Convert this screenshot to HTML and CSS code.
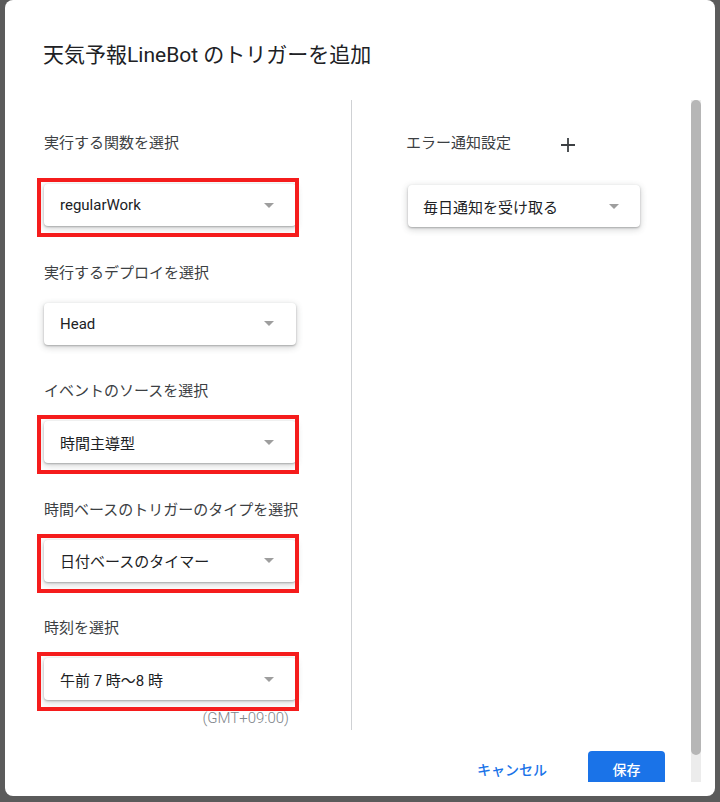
FILE: index.html
```html
<!DOCTYPE html>
<html lang="ja">
<head>
    <meta charset="UTF-8">
    <meta name="viewport" content="width=device-width, initial-scale=1.0">
    <title>トリガーを追加</title>
    <link rel="stylesheet" href="styles.css">
</head>
<body>

    <div class="dialog">
        <h2 class="dialog-title">天気予報LineBot のトリガーを追加</h2>

        <div class="dialog-body">
            <div class="dialog-scroll">
                <div class="columns">
                    <div class="col col-left">
                        <div class="field field-first">
                            <div class="field-label">実行する関数を選択</div>
                            <div class="select marked">
                                <span>regularWork</span>
                                <span class="select-arrow"></span>
                            </div>
                        </div>
                        <div class="field">
                            <div class="field-label">実行するデプロイを選択</div>
                            <div class="select">
                                <span>Head</span>
                                <span class="select-arrow"></span>
                            </div>
                        </div>
                        <div class="field">
                            <div class="field-label">イベントのソースを選択</div>
                            <div class="select marked">
                                <span>時間主導型</span>
                                <span class="select-arrow"></span>
                            </div>
                        </div>
                        <div class="field">
                            <div class="field-label">時間ベースのトリガーのタイプを選択</div>
                            <div class="select marked">
                                <span>日付ベースのタイマー</span>
                                <span class="select-arrow"></span>
                            </div>
                        </div>
                        <div class="field">
                            <div class="field-label">時刻を選択</div>
                            <div class="select marked">
                                <span>午前 7 時〜8 時</span>
                                <span class="select-arrow"></span>
                            </div>
                            <div class="tz-note">(GMT+09:00)</div>
                        </div>
                    </div>

                    <div class="col col-right">
                        <div class="field-label label-row">
                            <span>エラー通知設定</span>
                            <svg class="add-icon" width="14" height="14" viewBox="0 0 14 14">
                                <path d="M7 0v14M0 7h14" stroke="#3c4043" stroke-width="1.8" fill="none"/>
                            </svg>
                        </div>
                        <div class="select select-notify">
                            <span>毎日通知を受け取る</span>
                            <span class="select-arrow"></span>
                        </div>
                    </div>
                </div>

                <div class="actions">
                    <button class="btn btn-text">キャンセル</button>
                    <button class="btn btn-primary">保存</button>
                </div>
            </div>

            <div class="scrollbar">
                <div class="scrollbar-thumb"></div>
            </div>
        </div>
    </div>

</body>
</html>
```

FILE: styles.css
```css
html, body {
    margin: 0;
    height: 100%;
}
body {
    background-color: #5b5b5b;
    font-family: Roboto, 'Noto Sans CJK JP', sans-serif;
    color: #3c4043;
    overflow: hidden;
}
.dialog {
    width: 710px;
    height: 796px;
    margin-left: 5px;
    background-color: #fff;
    border-radius: 8px;
    display: flex;
    flex-direction: column;
}
.dialog-title {
    margin: 0;
    height: 100px;
    box-sizing: border-box;
    padding: 41px 0 0 38px;
    font-size: 21px;
    line-height: 28px;
    font-weight: 400;
    color: #202124;
}
.dialog-body {
    display: flex;
    height: 682px;
    padding-right: 14px;
}
.dialog-scroll {
    flex: 1;
    overflow: hidden;
}
.columns {
    display: flex;
    height: 630px;
}
.col-left {
    width: 347px;
    box-sizing: border-box;
    padding: 33px 0 0 39px;
    border-right: 1px solid #cfd1d4;
}
.col-right {
    padding: 33px 0 0 54px;
}

/* form fields */
.field + .field {
    margin-top: 36.5px;
}
.field-label {
    font-size: 15px;
    line-height: 20px;
    color: #3c4043;
    margin-bottom: 20px;
}
.field-first .field-label {
    margin-bottom: 31px;
}
.label-row {
    display: flex;
    align-items: center;
    margin-bottom: 32px;
}
.add-icon {
    margin-left: 50px;
    margin-top: 3px;
}
.select {
    width: 252px;
    height: 42px;
    box-sizing: border-box;
    padding: 0 22px 0 16px;
    display: flex;
    align-items: center;
    justify-content: space-between;
    background-color: #fff;
    border-radius: 4px;
    box-shadow: 0 1px 2px rgba(60,64,67,0.35), 0 2px 6px 1px rgba(60,64,67,0.2);
    font-size: 15px;
    color: #202124;
}
.select-arrow {
    width: 0;
    height: 0;
    border-left: 5px solid transparent;
    border-right: 5px solid transparent;
    border-top: 5px solid #9e9e9e;
}
.select-notify {
    width: 232px;
    margin-left: 2px;
    padding: 0 21px 0 15px;
}

/* red highlight frame drawn over the select */
.marked {
    position: relative;
}
.marked::after {
    content: '';
    position: absolute;
    top: -6px;
    left: -7px;
    right: -3px;
    bottom: -11px;
    border: 4px solid #f51c1c;
}
.tz-note {
    width: 252px;
    box-sizing: border-box;
    padding-right: 7px;
    margin-top: 8px;
    text-align: right;
    font-size: 15px;
    line-height: 20px;
    font-weight: 300;
    color: #80868b;
}

/* buttons */
.actions {
    display: flex;
    justify-content: flex-end;
    align-items: flex-start;
    gap: 25px;
    padding: 21px 26px 0 0;
}
.btn {
    font-family: inherit;
    font-size: 14px;
    font-weight: 500;
    height: 36px;
    border: none;
    border-radius: 4px;
    background: none;
    padding: 0 16px;
    cursor: pointer;
}
.btn-text {
    color: #1a73e8;
}
.btn-primary {
    width: 77px;
    background-color: #1a73e8;
    color: #fff;
}

/* scrollbar */
.scrollbar {
    width: 10px;
    background-color: #ececec;
}
.scrollbar-thumb {
    height: 655px;
    background-color: #b6b6b6;
    border-radius: 5px;
}
```
